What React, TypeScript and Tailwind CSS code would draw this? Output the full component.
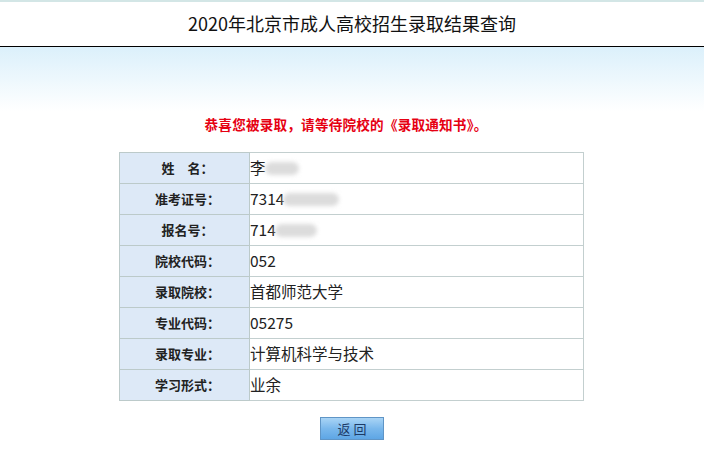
const rows: { label: string; value: string; blur?: number }[] = [
  { label: '姓\u3000名：', value: '李', blur: 34 },
  { label: '准考证号：', value: '7314', blur: 56 },
  { label: '报名号：', value: '714', blur: 42 },
  { label: '院校代码：', value: '052' },
  { label: '录取院校：', value: '首都师范大学' },
  { label: '专业代码：', value: '05275' },
  { label: '录取专业：', value: '计算机科学与技术' },
  { label: '学习形式：', value: '业余' },
];

export default function App() {
  return (
    <div
      className="w-[704px] h-[455px] bg-white flex flex-col text-black"
      style={{ fontFamily: '"Noto Sans CJK SC", "Noto Sans", sans-serif' }}
    >
      <header className="h-[47px] border-t-2 border-t-[#d3e6e6] border-b border-b-black flex items-center justify-center">
        <h1 className="text-[18px] leading-none text-[#111] pb-[2px]">2020年北京市成人高校招生录取结果查询</h1>
      </header>

      <div className="h-[64px] bg-gradient-to-b from-[#dbf0fb] to-white" />

      <p className="h-[41px] pt-[7px] pr-[12px] text-center text-[13.6px] font-bold text-[#e60012] leading-none tracking-[0.2px]">
        恭喜您被录取，请等待院校的《录取通知书》。
      </p>

      <table className="ml-[119px] w-[465px] border-collapse border border-[#bccaca]">
        <tbody>
          {rows.map((r) => (
            <tr key={r.label} className="h-[31px]">
              <td className="w-[130px] border border-[#bccaca] bg-[#dde9f7] text-center text-[13px] font-bold text-[#222] pl-[6px]">
                {r.label}
              </td>
              <td className="border border-[#c3cfcf] bg-white pl-0 text-[15.5px] text-[#222]">
                <span className="inline-flex items-center">
                  {r.value}
                  {r.blur && (
                    <span
                      className="inline-block h-[13px] ml-[-1px] rounded-full bg-[#dcdcdc] blur-[2px]"
                      style={{ width: r.blur }}
                    />
                  )}
                </span>
              </td>
            </tr>
          ))}
        </tbody>
      </table>

      <div className="flex justify-center mt-[16px]">
        <button
          type="button"
          className="w-[64px] h-[23px] border border-[#5f95c6] bg-gradient-to-b from-[#a9d4f5] via-[#7ab8ec] to-[#5ea6e5] text-[13px] leading-none text-[#1d3a66] tracking-[3px] pl-[3px]"
        >
          返回
        </button>
      </div>
    </div>
  );
}
